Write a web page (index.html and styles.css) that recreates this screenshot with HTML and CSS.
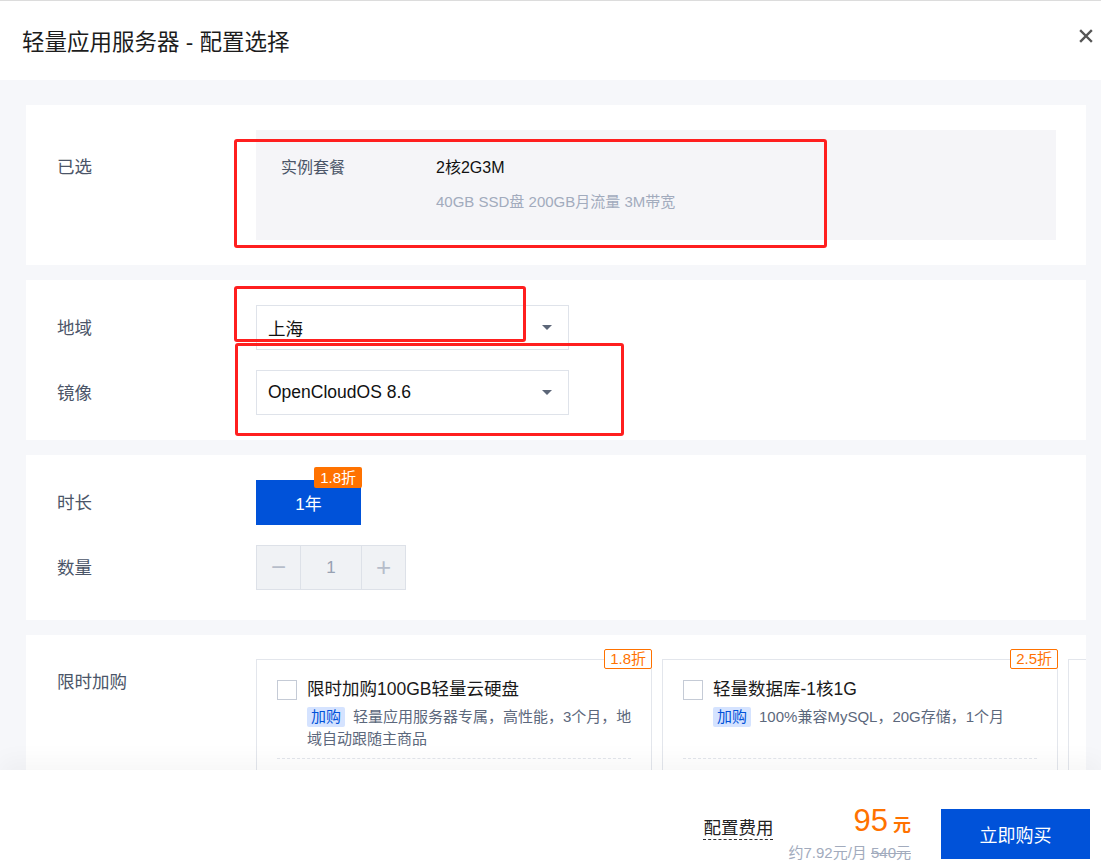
FILE: index.html
```html
<!DOCTYPE html>
<html>
  <head>
    <meta charset="utf-8">
    <title>轻量应用服务器 - 配置选择</title>
    <link rel="stylesheet" href="styles.css">
  </head>
  <body>
    <div class="dialog">

      <!-- Kopf -->
      <div class="header">
        <h1>轻量应用服务器 - 配置选择</h1>
        <svg class="close" width="14" height="14" viewBox="0 0 14 14">
          <path d="M2 2 L12 12 M12 2 L2 12" stroke="#555" stroke-width="2.4" stroke-linecap="square"/>
        </svg>
      </div>

      <!-- Inhalt -->
      <div class="content">

        <div class="section">
          <div class="row">
            <div class="label label-top">已选</div>
            <div class="picked">
              <div class="picked-name">实例套餐</div>
              <div>
                <div class="picked-value">2核2G3M</div>
                <div class="picked-sub">40GB SSD盘 200GB月流量 3M带宽</div>
              </div>
            </div>
          </div>
        </div>

        <div class="section">
          <div class="row">
            <div class="label">地域</div>
            <div class="select">上海<span class="caret"></span></div>
          </div>
          <div class="row">
            <div class="label">镜像</div>
            <div class="select">OpenCloudOS 8.6<span class="caret"></span></div>
          </div>
        </div>

        <div class="section section-time">
          <div class="row">
            <div class="label">时长</div>
            <div class="period">1年<span class="discount">1.8折</span></div>
          </div>
          <div class="row">
            <div class="label">数量</div>
            <div class="stepper">
              <div class="step-btn">&minus;</div>
              <div class="step-num">1</div>
              <div class="step-btn">+</div>
            </div>
          </div>
        </div>

        <div class="section section-addon">
          <div class="row row-top">
            <div class="label label-addon">限时加购</div>
            <div class="cards">
              <div class="card">
                <span class="card-badge">1.8折</span>
                <div class="card-head">
                  <span class="checkbox"></span>
                  <div class="card-body">
                    <div class="card-title">限时加购100GB轻量云硬盘</div>
                    <div class="card-desc"><span class="tag">加购</span>轻量应用服务器专属，高性能，3个月，地域自动跟随主商品</div>
                  </div>
                </div>
                <div class="card-line"></div>
              </div>
              <div class="card">
                <span class="card-badge">2.5折</span>
                <div class="card-head">
                  <span class="checkbox"></span>
                  <div class="card-body">
                    <div class="card-title">轻量数据库-1核1G</div>
                    <div class="card-desc"><span class="tag">加购</span>100%兼容MySQL，20G存储，1个月</div>
                  </div>
                </div>
                <div class="card-line"></div>
              </div>
              <div class="card"></div>
            </div>
          </div>
        </div>

      </div>

      <!-- Fuss -->
      <div class="footer">
        <span class="fee-label">配置费用</span>
        <div class="price">
          <div class="price-main"><span class="price-num">95</span><span class="price-unit">元</span></div>
          <div class="price-sub">约7.92元/月 <s>540元</s></div>
        </div>
        <div class="buy">立即购买</div>
      </div>
    </div>

    <!-- rote Markierungen -->
    <div class="mark mark-1"></div>
    <div class="mark mark-2"></div>
    <div class="mark mark-3"></div>
  </body>
</html>
```

FILE: styles.css
```css
body {
    margin: 0;
    width: 1101px;
    height: 868px;
    overflow: hidden;
    background-color: white;
    font-family: "Liberation Sans", "Noto Sans CJK SC", sans-serif;
    color: #222;
    position: relative;
    }

.dialog {
    display: flex;
    flex-direction: column;
    height: 868px;
    }

.header {
    height: 79px;
    border-top: 1px solid #dcdcdc;
    display: flex;
    align-items: center;
    justify-content: space-between;
    padding: 0 8px 0 22px;
    flex-shrink: 0;
    }

h1 {
    margin: 0;
    font-size: 22.5px;
    font-weight: normal;
    color: #1c1c1c;
    margin-top: -2px;
    }

.close {
    margin-top: -10px;
    }

.content {
    flex: 1;
    overflow: hidden;
    background-color: #f6f7fa;
    padding: 25px 15px 0 26px;
    }

.section {
    background-color: white;
    padding: 25px 30px 25px 31px;
    margin-bottom: 15px;
    display: flex;
    flex-direction: column;
    gap: 20px;
    }

.section-time {
    padding-bottom: 30px;
    }

.section-addon {
    padding: 24px 0 0 31px;
    overflow: hidden;
    }

.row {
    display: flex;
    align-items: center;
    }

.row-top {
    align-items: flex-start;
    }

.label {
    width: 199px;
    flex-shrink: 0;
    font-size: 17.5px;
    color: #4b5568;
    margin-top: -3px;
    }

.label-top {
    align-self: flex-start;
    padding-top: 25px;
    line-height: 24px;
    margin-top: 0;
    }

.label-addon {
    padding-top: 11px;
    line-height: 24px;
    margin-top: 0;
    }

/* Ausgewählt */
.picked {
    flex: 1;
    background-color: #f5f5f8;
    padding: 26px 25px 27px 25px;
    display: flex;
    height: 57px;
    }

.picked-name {
    width: 155px;
    font-size: 16px;
    line-height: 24px;
    color: #4b5568;
    }

.picked-value {
    font-size: 16px;
    line-height: 24px;
    color: #111;
    }

.picked-sub {
    margin-top: 12px;
    font-size: 15px;
    line-height: 20px;
    color: #a2abbd;
    }

/* Auswahlfeld */
.select {
    width: 289px;
    height: 43px;
    border: 1px solid #dfe3ea;
    padding: 0 11px;
    display: flex;
    align-items: center;
    justify-content: space-between;
    font-size: 17.5px;
    color: #111;
    }

.caret {
    width: 0;
    height: 0;
    border-left: 5px solid transparent;
    border-right: 5px solid transparent;
    border-top: 5px solid #5c6678;
    margin-right: 5px;
    }

/* Dauer */
.period {
    position: relative;
    width: 105px;
    height: 45px;
    background-color: #0052d9;
    color: white;
    font-size: 17px;
    display: flex;
    align-items: center;
    justify-content: center;
    }

.discount {
    position: absolute;
    top: -13px;
    right: -1px;
    background-color: #ff7200;
    color: white;
    font-size: 15px;
    line-height: 21px;
    padding: 0 6px;
    border-radius: 2px;
    }

.stepper {
    display: flex;
    height: 45px;
    border: 1px solid #dde1e8;
    box-sizing: border-box;
    background-color: #f0f2f5;
    }

.step-btn {
    width: 43px;
    display: flex;
    align-items: center;
    justify-content: center;
    font-size: 26px;
    color: #b6bdca;
    }

.step-num {
    width: 60px;
    border-left: 1px solid #dde1e8;
    border-right: 1px solid #dde1e8;
    display: flex;
    align-items: center;
    justify-content: center;
    font-size: 17px;
    color: #98a1b2;
    }

/* Zusatzangebote */
.cards {
    display: flex;
    gap: 10px;
    }

.card {
    position: relative;
    width: 396px;
    height: 150px;
    flex-shrink: 0;
    border: 1px solid #e3e6ec;
    padding: 19px 20px 0 20px;
    box-sizing: border-box;
    }

.card-badge {
    position: absolute;
    top: -11px;
    right: -1px;
    border: 1px solid #ff7200;
    background-color: white;
    color: #ff7200;
    font-size: 15px;
    line-height: 18px;
    padding: 0 5px;
    border-radius: 2px;
    }

.card-head {
    display: flex;
    gap: 10px;
    }

.checkbox {
    width: 18px;
    height: 18px;
    border: 1px solid #c5cbd6;
    flex-shrink: 0;
    margin-top: 1px;
    }

.card-body {
    margin-right: -8px;
    }

.card-title {
    font-size: 17.5px;
    line-height: 20px;
    color: #1a1a1a;
    }

.card-desc {
    margin-top: 7px;
    font-size: 15px;
    line-height: 22px;
    color: #5c687c;
    min-height: 44px;
    }

.tag {
    display: inline-block;
    background-color: #d5e3ff;
    color: #0052d9;
    line-height: 20px;
    padding: 0 4px;
    margin-right: 8px;
    border-radius: 2px;
    }

.card-line {
    margin-top: 8px;
    border-top: 1px dashed #e3e6ec;
    }

/* Fuss */
.footer {
    height: 98px;
    flex-shrink: 0;
    background-color: white;
    box-shadow: 0 -10px 22px rgba(0, 0, 0, 0.035);
    display: flex;
    align-items: center;
    justify-content: flex-end;
    padding-right: 11px;
    position: relative;
    }

.fee-label {
    font-size: 17.5px;
    color: #222;
    border-bottom: 1px dashed #333;
    line-height: 22px;
    margin-top: 18px;
    }

.price {
    margin-left: 15px;
    margin-right: 30px;
    text-align: right;
    margin-top: 28px;
    }

.price-main {
    color: #ff7200;
    line-height: 34px;
    }

.price-num {
    font-size: 31px;
    }

.price-unit {
    font-size: 18px;
    font-weight: bold;
    margin-left: 5px;
    }

.price-sub {
    font-size: 15px;
    color: #a2abbd;
    line-height: 20px;
    }

.buy {
    width: 149px;
    height: 50px;
    background-color: #0052d9;
    color: white;
    font-size: 18px;
    display: flex;
    align-items: center;
    justify-content: center;
    margin-top: 30px;
    }

/* rote Markierungen */
.mark {
    position: absolute;
    border: 3px solid #ff1f1f;
    border-radius: 3px;
    box-sizing: border-box;
    }

.mark-1 {
    left: 234px;
    top: 139px;
    width: 593px;
    height: 109px;
    }

.mark-2 {
    left: 234px;
    top: 286px;
    width: 292px;
    height: 56px;
    }

.mark-3 {
    left: 235px;
    top: 343px;
    width: 389px;
    height: 93px;
    }
```
